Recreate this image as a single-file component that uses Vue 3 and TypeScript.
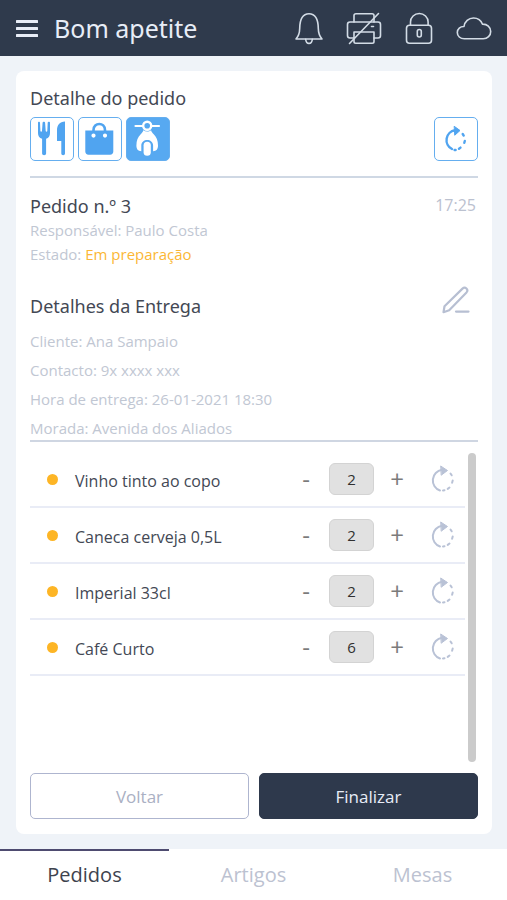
<script setup lang="ts">
import { ref } from 'vue'

interface OrderItem {
  id: number
  name: string
  quantity: number
}

const services = ['Mesa', 'Takeaway', 'Entrega'] as const
const selectedService = ref<string>('Entrega')

const delivery = [
  { label: 'Cliente', value: 'Ana Sampaio' },
  { label: 'Contacto', value: '9x xxxx xxx' },
  { label: 'Hora de entrega', value: '26-01-2021 18:30' },
  { label: 'Morada', value: 'Avenida dos Aliados' },
]

const items = ref<OrderItem[]>([
  { id: 1, name: 'Vinho tinto ao copo', quantity: 2 },
  { id: 2, name: 'Caneca cerveja 0,5L', quantity: 2 },
  { id: 3, name: 'Imperial 33cl', quantity: 2 },
  { id: 4, name: 'Café Curto', quantity: 6 },
])

const tabs = ['Pedidos', 'Artigos', 'Mesas']
const activeTab = ref('Pedidos')

function change(item: OrderItem, delta: number) {
  item.quantity = Math.max(0, item.quantity + delta)
}
</script>

<template>
  <div class="app">
    <header class="topbar">
      <button class="icon-button menu" type="button" aria-label="Menu">
        <svg width="22" height="18" viewBox="0 0 22 18" fill="currentColor">
          <rect y="1" width="22" height="3" rx="0.5" />
          <rect y="8" width="22" height="3" rx="0.5" />
          <rect y="15" width="22" height="3" rx="0.5" />
        </svg>
      </button>
      <h1 class="brand">Bom apetite</h1>
      <div class="status">
        <button class="icon-button" type="button" aria-label="Notificações">
          <svg width="36" height="36" viewBox="0 0 36 36" class="line">
            <path d="M5 29c2.600-2.800 3.600-5 3.700-10.500C8.800 9.400 11.500 3.700 18 3.700S27.200 9.400 27.300 18.500c.1 5.500 1.100 7.700 3.700 10.500z" />
            <path d="M14.700 29.200c.2 2.600 1.400 4.200 3.300 4.200s3.100-1.600 3.300-4.200" />
          </svg>
        </button>
        <button class="icon-button" type="button" aria-label="Impressora desligada">
          <svg width="36" height="36" viewBox="0 0 36 36" class="line">
            <path d="M8 12V5.500C8 4.200 8.700 3.700 10 3.700h16c1.300 0 2 .5 2 1.800V12" />
            <path d="M8.500 28H4c-1.600 0-2.500-.9-2.500-2.500v-11C1.500 12.900 2.400 12 4 12h28c1.600 0 2.500.9 2.500 2.500v11c0 1.600-.9 2.500-2.500 2.500h-4" />
            <path d="M8 22h20v9.500c0 1.100-.7 1.700-1.700 1.700H9.700C8.700 33.200 8 32.600 8 31.500z" />
            <path d="M25.500 16.500h2M3.500 33.500 32.500 3.500" />
          </svg>
        </button>
        <button class="icon-button" type="button" aria-label="Bloquear">
          <svg width="36" height="36" viewBox="0 0 36 36" class="line">
            <rect x="5.500" y="15.200" width="25" height="18" rx="3" />
            <path d="M9.500 15v-3a8.800 8.500 0 0 1 17.600 0v3" />
            <rect x="16.300" y="19.500" width="4" height="7.500" rx="2" />
          </svg>
        </button>
        <button class="icon-button" type="button" aria-label="Nuvem">
          <svg width="36" height="36" viewBox="0 0 36 36" class="line">
            <path d="M8.300 28.800C4.200 28.800 1.300 26.100 1.300 22.500c0-3.700 3-6.200 6.700-6 .7-5 4.600-8.500 9.500-8.500 4.200 0 7.500 2.200 8.900 6.100 4.700-.2 8.300 3 8.300 7.300 0 4.200-3.200 7.400-7.500 7.400z" />
          </svg>
        </button>
      </div>
    </header>

    <main class="content">
      <section class="card">
        <h2 class="title">Detalhe do pedido</h2>
        <div class="tools">
          <button
            v-for="service in services"
            :key="service"
            type="button"
            class="tool"
            :class="{ selected: selectedService === service }"
            :aria-label="service"
            :aria-pressed="selectedService === service"
            @click="selectedService = service"
          >
            <svg v-if="service === 'Mesa'" width="42" height="42" viewBox="0 0 42 42" fill="currentColor">
              <path d="M7 4.700C7 3.300 8.900 3.300 9 4.700L9.400 13c.1 1.100 1.500 1.100 1.600 0l.6-8.300c.1-1.400 2.400-1.400 2.500 0l.6 8.300c.1 1.100 1.500 1.100 1.600 0l.4-8.300c.1-1.400 2.300-1.400 2.300 0V15c0 3-1.300 4.900-3.900 5.700V35.500c0 2.300-4 2.300-4 0V20.700C8.300 19.900 7 18 7 15z" />
              <path d="M34 3.500V35.500c0 2.300-3.700 2.300-3.700 0V23H26V12.500C26 7 28.700 3.500 34 3.500z" />
            </svg>
            <svg v-else-if="service === 'Takeaway'" width="42" height="42" viewBox="0 0 42 42" fill="currentColor">
              <path fill-rule="evenodd" d="M6.300 12.500h28V33.500c0 2-1.200 3.200-3.200 3.200H9.500c-2 0-3.200-1.200-3.200-3.200zM14.500 15.500a2.100 2.100 0 1 0 0 4.200 2.100 2.100 0 0 0 0-4.200zM26 15.500a2.100 2.100 0 1 0 0 4.200 2.100 2.100 0 0 0 0-4.200z" />
              <path d="M14.500 13.500v-1.500c0-8 11.500-8 11.500 0v1.500" fill="none" stroke="currentColor" stroke-width="2.600" />
            </svg>
            <svg v-else width="42" height="42" viewBox="0 0 42 42" fill="currentColor">
              <path d="M8.500 8h7M25 8h7" stroke="currentColor" stroke-width="2.200" stroke-linecap="round" />
              <circle cx="20.200" cy="7.800" r="4" fill="none" stroke="currentColor" stroke-width="2.400" />
              <path d="M16.300 12.200c2.300 1.800 5.500 1.800 7.800 0 .4 1.700 1.200 2.600 2.600 4C29.500 19 31 22.500 31 27.500c0 3.500-1.500 5.700-4.900 5.700V27.500c0-7.500-11.800-7.500-11.800 0v5.700c-3.400 0-4.900-2.200-4.900-5.700 0-5 1.500-8.500 4.300-11.300 1.400-1.400 2.200-2.300 2.600-4z" />
              <rect x="16.600" y="23.800" width="7.200" height="14" rx="3.600" />
            </svg>
          </button>
          <button class="tool refresh" type="button" aria-label="Atualizar pedido">
            <svg width="28" height="28" viewBox="0 0 28 28" class="cycle bold">
              <path d="M10 24A10 10 0 0 1 13 5.200" />
              <path d="M12.500 1.500 18 5.500l-5 4.500z" class="head" />
              <path d="M20.700 9l1 1.600M22.800 16l-.5 1.800M18.500 22.600l-1.500 1.100M13.600 25h-1" />
            </svg>
          </button>
        </div>

        <div class="order">
          <div class="order-head">
            <h2 class="title">Pedido n.º 3</h2>
            <time class="time">17:25</time>
          </div>
          <p class="meta">Responsável: Paulo Costa</p>
          <p class="meta">Estado: <span class="state">Em preparação</span></p>
        </div>

        <div class="delivery">
          <div class="delivery-head">
            <h2 class="title">Detalhes da Entrega</h2>
            <button class="icon-button edit" type="button" aria-label="Editar entrega">
              <svg width="28" height="28" viewBox="0 0 28 28" fill="none" stroke="currentColor" stroke-width="2.200" stroke-linejoin="round" stroke-linecap="round">
                <path d="M1.500 26.200l1-6L20.500 2.600c2.700-2.500 6.400 1 4 3.800L7.200 24.300z" />
                <path d="M14 25.600h12.500" />
              </svg>
            </button>
          </div>
          <div class="facts">
            <p v-for="fact in delivery" :key="fact.label">{{ fact.label }}: {{ fact.value }}</p>
          </div>
        </div>

        <div class="list-area">
          <ul class="items">
            <li v-for="item in items" :key="item.id" class="item">
              <span class="dot"></span>
              <label class="name" :for="`quantity-${item.id}`">{{ item.name }}</label>
              <button class="step" type="button" :aria-label="`Menos ${item.name}`" @click="change(item, -1)">-</button>
              <input :id="`quantity-${item.id}`" v-model.number="item.quantity" class="quantity" type="text" inputmode="numeric" />
              <button class="step" type="button" :aria-label="`Mais ${item.name}`" @click="change(item, 1)">+</button>
              <button class="icon-button again" type="button" :aria-label="`Atualizar ${item.name}`">
                <svg width="28" height="28" viewBox="0 0 28 28" class="cycle">
                  <path d="M12 25.500A10.700 10.700 0 0 1 14 4.800" />
                  <path d="M13 1.200 19.500 5.500l-6 4.500z" class="head" />
                  <path d="M22.500 8.500l1.200 1.800M24.700 15.500l-.6 2.200M21.500 22.500l-1.800 1.400M16.500 25.300l-1.500.3" />
                </svg>
              </button>
            </li>
          </ul>
          <div class="scrollbar"></div>
        </div>

        <div class="actions">
          <button class="action back" type="button">Voltar</button>
          <button class="action finish" type="button">Finalizar</button>
        </div>
      </section>
    </main>

    <nav class="tabs">
      <a
        v-for="tab in tabs"
        :key="tab"
        :href="`#${tab.toLowerCase()}`"
        class="tab"
        :class="{ active: activeTab === tab }"
        @click="activeTab = tab"
      >{{ tab }}</a>
    </nav>
  </div>
</template>

<style>
body {
  margin: 0;
  background: #eff3f8;
}
</style>

<style scoped>
.app {
  display: flex;
  flex-direction: column;
  min-height: 100vh;
  font-family: "Open Sans", "Noto Sans", sans-serif;
  color: #434854;
  background: #eff3f8;
}

.app * {
  box-sizing: border-box;
}

h1,
h2,
p,
ul {
  margin: 0;
  padding: 0;
  font-weight: 400;
}

button,
input {
  font: inherit;
  margin: 0;
  padding: 0;
}

svg {
  display: block;
}

.icon-button {
  border: 0;
  background: none;
  color: inherit;
}

.topbar {
  display: flex;
  align-items: center;
  height: 56px;
  padding: 0 15px 0 16px;
  background: #2f3a4c;
  color: #e8edf7;
}

.brand,
.title {
  font-family: "Noto Sans", "Open Sans", sans-serif;
}

.brand {
  margin-left: 16px;
  font-size: 25px;
  line-height: 32px;
}

.status {
  display: flex;
  gap: 19px;
  margin-left: auto;
  color: #d3dce6;
}

.line {
  fill: none;
  stroke: currentColor;
  stroke-width: 1.6;
  stroke-linecap: round;
  stroke-linejoin: round;
}

.content {
  display: flex;
  flex: 1;
  padding: 15px 15px 15px 16px;
}

.card {
  display: flex;
  flex: 1;
  flex-direction: column;
  padding: 15px 14px;
  border-radius: 8px;
  background: #fff;
}

.title {
  font-size: 18px;
  line-height: 24px;
}

.tools {
  display: flex;
  gap: 4px;
  padding: 7px 0 15px;
  border-bottom: 2px solid #cfd8e4;
}

.tool {
  display: flex;
  align-items: center;
  justify-content: center;
  width: 44px;
  height: 44px;
  border: 1px solid #65aeef;
  border-radius: 5px;
  background: #fff;
  color: #50a4f0;
}

.tool.selected {
  background: #57a9f1;
  color: #fff;
}

.refresh {
  margin-left: auto;
}

.cycle {
  fill: none;
  stroke: currentColor;
  stroke-width: 2;
  stroke-linecap: round;
}

.cycle.bold {
  stroke-width: 2.4;
}

.head {
  fill: currentColor;
  stroke-width: 1;
}

.order {
  padding-top: 16px;
}

.order-head,
.delivery-head {
  display: flex;
  justify-content: space-between;
}

.time {
  padding-right: 2px;
  font-size: 16px;
  line-height: 22px;
  color: #bbc1cf;
}

.meta,
.facts {
  font-size: 15px;
  color: #c1c7d3;
}

.meta {
  line-height: 24px;
}

.state {
  color: #fbb735;
}

.delivery {
  padding-top: 28px;
  border-bottom: 2px solid #cfd6e2;
}

.delivery-head {
  height: 24px;
  padding-right: 8px;
}

.edit {
  height: 28px;
  margin-top: -8px;
  color: #b7bfd2;
}

.facts {
  display: grid;
  gap: 7px;
  padding: 12px 0 1px;
  line-height: 22px;
}

.list-area {
  display: flex;
  flex: 1;
  gap: 3px;
  padding: 10px 2px 11px 0;
}

.items {
  flex: 1;
  list-style: none;
}

.item {
  display: flex;
  align-items: center;
  height: 56px;
  padding: 0 9px 0 17px;
  border-bottom: 2px solid #e9ecf6;
}

.dot {
  width: 11px;
  height: 11px;
  border-radius: 50%;
  background: #fdb525;
}

.name {
  flex: 1;
  margin-left: 17px;
  padding-top: 3px;
  font-size: 16px;
  line-height: 24px;
}

.step {
  width: 24px;
  height: 32px;
  border: 0;
  background: none;
  font-size: 24px;
  line-height: 32px;
  color: #7b7b7b;
}

.quantity {
  width: 45px;
  height: 32px;
  margin: 0 11px;
  border: 1px solid #d3d3d3;
  border-radius: 6px;
  background: #e1e1e1;
  font-size: 15px;
  line-height: 24px;
  text-align: center;
  color: #303030;
}

.again {
  margin-left: 19px;
  color: #b9c2d6;
}

.scrollbar {
  width: 8px;
  margin-top: 1px;
  border-radius: 4px;
  background: #cbcbcb;
}

.actions {
  display: grid;
  grid-template-columns: 1fr 1fr;
  gap: 10px;
}

.action {
  height: 46px;
  border: 1px solid #aeb5cf;
  border-radius: 5px;
  background: #fff;
  font-size: 17px;
  color: #aab0c3;
}

.finish {
  border-color: #2e394c;
  background: #2e394c;
  color: #e8edf7;
}

.tabs {
  display: grid;
  grid-template-columns: repeat(3, 1fr);
  background: #fff;
}

.tab {
  height: 51px;
  border-top: 2px solid transparent;
  font-size: 20px;
  line-height: 48px;
  text-align: center;
  text-decoration: none;
  color: #bcc2d1;
}

.tab.active {
  border-color: #4e4b70;
  color: #3e434e;
}
</style>
